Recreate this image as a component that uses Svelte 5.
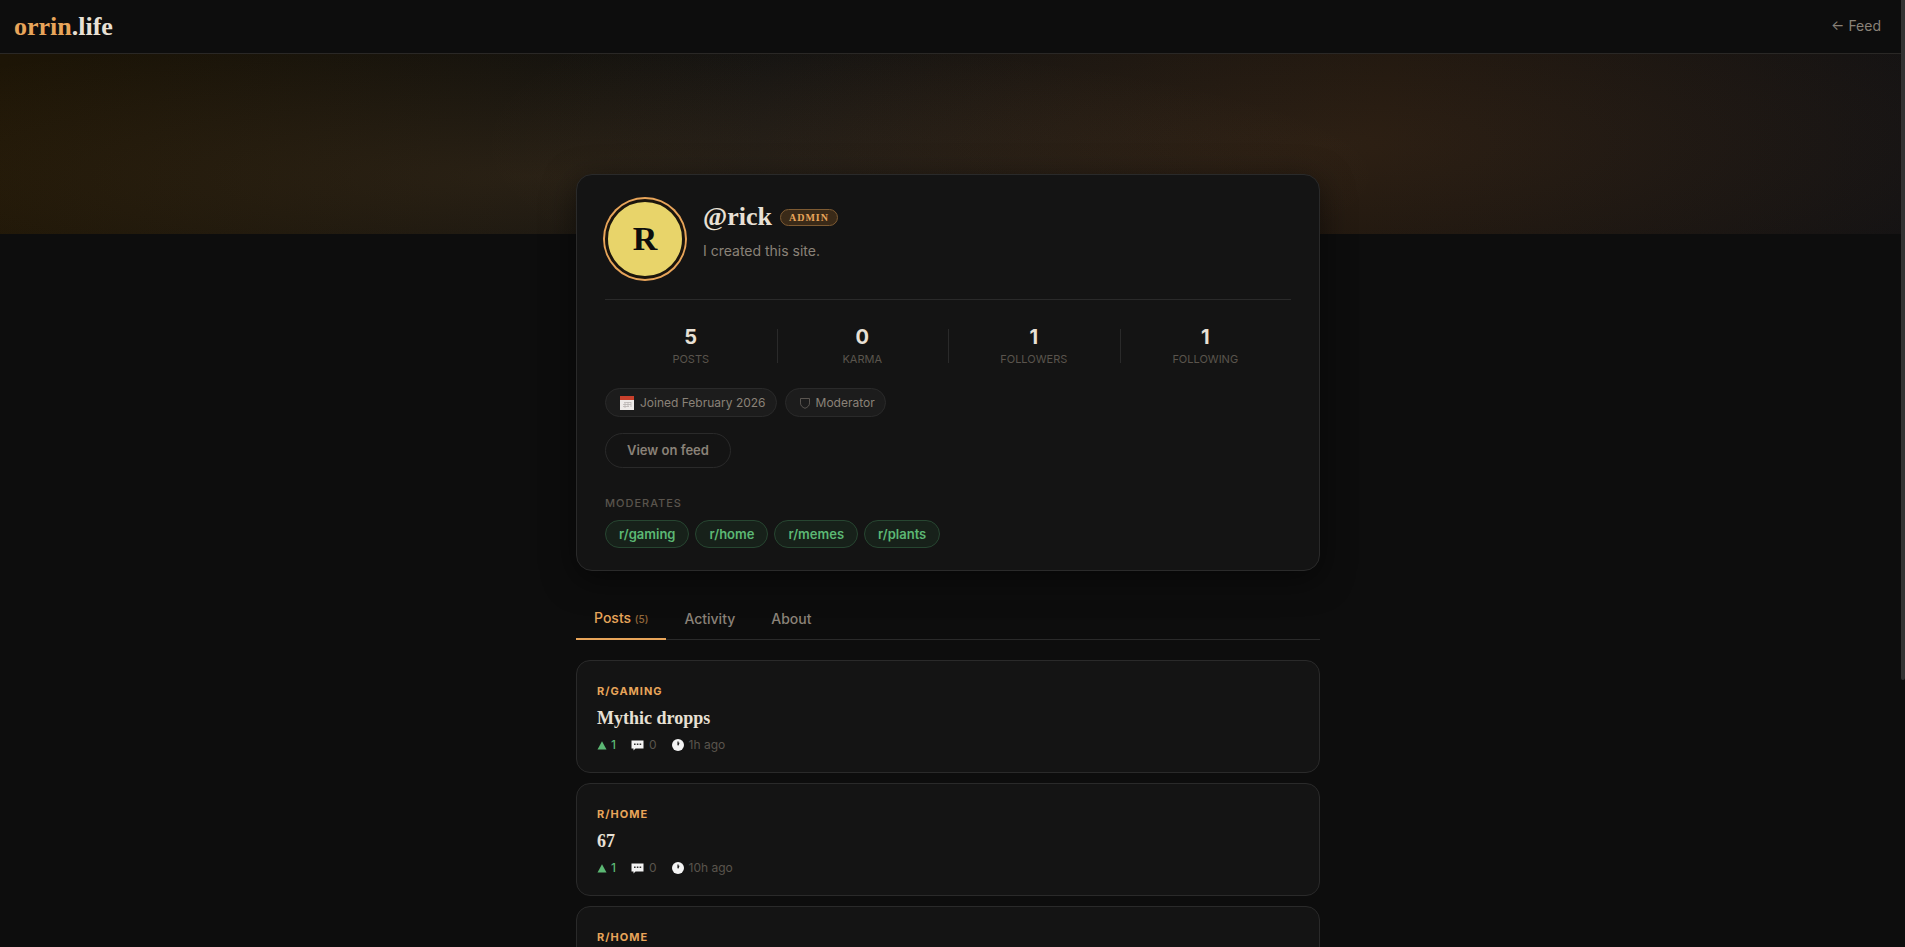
<script lang="ts">
	const stats = [
		{ value: 5, label: 'Posts' },
		{ value: 0, label: 'Karma' },
		{ value: 1, label: 'Followers' },
		{ value: 1, label: 'Following' }
	];

	const moderates = ['gaming', 'home', 'memes', 'plants'];

	const tabs = [
		{ id: 'posts', label: 'Posts', count: 5 },
		{ id: 'activity', label: 'Activity' },
		{ id: 'about', label: 'About' }
	];

	const posts = [
		{ id: 1, sub: 'gaming', title: 'Mythic dropps', votes: 1, comments: 0, age: '1h ago' },
		{ id: 2, sub: 'home', title: '67', votes: 1, comments: 0, age: '10h ago' },
		{ id: 3, sub: 'home' }
	];

	let activeTab = $state('posts');
</script>

<div class="page">
	<header class="topbar">
		<a class="logo" href="/"><span>orrin</span>.life</a>
		<a class="back" href="/feed">← Feed</a>
	</header>

	<div class="banner"></div>

	<main class="container">
		<section class="profile">
			<div class="identity">
				<div class="avatar">R</div>
				<div class="who">
					<div class="name-row">
						<h1>@rick</h1>
						<span class="badge">ADMIN</span>
					</div>
					<p class="bio">I created this site.</p>
				</div>
			</div>

			<div class="stats">
				{#each stats as stat (stat.label)}
					<div class="stat">
						<strong>{stat.value}</strong>
						<span>{stat.label}</span>
					</div>
				{/each}
			</div>

			<div class="pills">
				<span class="pill">
					<svg width="14" height="14" viewBox="0 0 14 14" aria-hidden="true">
						<rect width="14" height="14" fill="#eeeae8" />
						<rect width="14" height="4" fill="#c8402c" />
						<path
							d="M4 6.5h7M3 8.5h8M3 10.5h6M5 7v5M8 6v5M11 6v5"
							stroke="#b9b4b1"
							stroke-width="0.8"
						/>
					</svg>
					Joined February 2026
				</span>
				<span class="pill">
					<svg width="10" height="12" viewBox="0 0 10 12" aria-hidden="true">
						<path
							d="M0.5 1.5h9v4.4c0 2.8-1.8 4.4-4.5 5.4-2.7-1-4.5-2.6-4.5-5.4z"
							fill="none"
							stroke="#6b655e"
							stroke-width="0.8"
						/>
					</svg>
					Moderator
				</span>
			</div>

			<button class="view-btn">View on feed</button>

			<h2>Moderates</h2>
			<div class="chips">
				{#each moderates as sub (sub)}
					<a class="chip" href="/r/{sub}">r/{sub}</a>
				{/each}
			</div>
		</section>

		<div class="tabs" role="tablist">
			{#each tabs as tab (tab.id)}
				<button
					class="tab"
					class:active={activeTab === tab.id}
					role="tab"
					aria-selected={activeTab === tab.id}
					onclick={() => (activeTab = tab.id)}
				>
					{tab.label}
					{#if tab.count}<small>({tab.count})</small>{/if}
				</button>
			{/each}
		</div>

		<div class="posts">
			{#each posts as post (post.id)}
				<article class="post">
					<a class="sub" href="/r/{post.sub}">r/{post.sub}</a>
					{#if post.title}
						<h3>{post.title}</h3>
						<div class="meta">
							<span class="votes">
								<svg width="10" height="9" viewBox="0 0 10 9" aria-hidden="true">
									<path d="M5 0.2 9.5 8.5h-9z" fill="#5cb874" />
								</svg>
								{post.votes}
							</span>
							<span class="item">
								<svg width="13" height="12" viewBox="0 0 13 12" aria-hidden="true">
									<path d="M0.5 1.5h12v8h-8l-2 2v-2h-2z" fill="#f4f4f4" />
									<path d="M3 4.5h1.6v1.6H3zM5.8 4.5h1.6v1.6H5.8zM8.6 4.5h1.6v1.6H8.6z" fill="#333" />
								</svg>
								{post.comments}
							</span>
							<span class="item">
								<svg width="12" height="12" viewBox="0 0 12 12" aria-hidden="true">
									<circle cx="6" cy="6" r="6" fill="#f4f4f4" />
									<path d="M6 2.4v3.8l1-2.6" fill="none" stroke="#222" stroke-width="1.2" />
								</svg>
								{post.age}
							</span>
						</div>
					{/if}
				</article>
			{/each}
		</div>
	</main>

	<div class="scroll-thumb"></div>
</div>

<style>
	:global(body) {
		background: #0d0d0d;
		margin: 0;
	}

	.page {
		color: #e8e0d5;
		font-family: Inter, sans-serif;
		height: 100vh;
		overflow: hidden;
	}

	a {
		color: inherit;
		text-decoration: none;
	}

	h1,
	h2,
	h3,
	p {
		margin: 0;
	}

	button {
		cursor: pointer;
		font-family: inherit;
	}

	.topbar {
		align-items: center;
		border-bottom: 1px solid #2a2826;
		display: flex;
		height: 53px;
		justify-content: space-between;
		margin-right: 4px;
		padding: 0 20px 0 14px;
	}

	.logo {
		font-family: 'Liberation Serif', serif;
		font-size: 26px;
		font-weight: 700;
	}

	.logo span {
		color: #e8a55a;
	}

	.back {
		color: #8a8278;
		font-size: 14px;
		line-height: 20px;
		padding-bottom: 2px;
	}

	.banner {
		background:
			radial-gradient(ellipse 45% 80% at 28% 68%, rgba(232, 165, 90, 0.1), transparent),
			radial-gradient(ellipse 45% 120% at 70% 50%, rgba(232, 150, 80, 0.11), transparent),
			linear-gradient(100deg, #1d1506 0%, #0f1010 40%, #16110c 72%, #101012 100%);
		height: 180px;
		margin-right: 4px;
	}

	.container {
		margin: -60px auto 0;
		max-width: 744px;
		padding: 0 23px 0 14px;
	}

	.profile {
		background: #141414;
		border: 1px solid #2a2a2a;
		border-radius: 16px;
		box-shadow: 0 8px 32px rgba(0, 0, 0, 0.5);
		padding: 24px 28px 22px;
		position: relative;
	}

	.identity {
		border-bottom: 1px solid #2a2a2a;
		display: flex;
		gap: 18px;
		padding-bottom: 20px;
	}

	.avatar {
		align-items: center;
		background: #e8d46a;
		border: 3px solid #1b150c;
		border-radius: 50%;
		box-shadow: 0 0 0 2px #e8a55a;
		box-sizing: border-box;
		color: #0d0d0d;
		display: flex;
		flex-shrink: 0;
		font-family: 'Liberation Serif', serif;
		font-size: 34px;
		font-weight: 700;
		height: 80px;
		justify-content: center;
		width: 80px;
	}

	.name-row {
		align-items: center;
		display: flex;
		gap: 8px;
		height: 36px;
	}

	h1 {
		font-family: 'Liberation Serif', serif;
		font-size: 26px;
		font-weight: 700;
	}

	.badge {
		background: #3a2a18;
		border: 1px solid #7d5a32;
		border-radius: 20px;
		color: #e8a55a;
		font-family: 'Liberation Serif', serif;
		font-size: 10px;
		font-weight: 700;
		letter-spacing: 1px;
		line-height: 15px;
		padding: 0 8px;
	}

	.bio {
		color: #8a8278;
		font-size: 14px;
		line-height: 20px;
		margin-top: 6px;
	}

	.stats {
		display: grid;
		grid-template-columns: repeat(4, 1fr);
		padding: 24px 0 20px;
	}

	.stat {
		align-items: center;
		display: flex;
		flex-direction: column;
		position: relative;
	}

	.stat + .stat::before {
		background: #2a2a2a;
		bottom: 5px;
		content: '';
		left: 0;
		position: absolute;
		top: 5px;
		width: 1px;
	}

	.stat strong {
		font-size: 20px;
		font-weight: 700;
		line-height: 26px;
	}

	.stat span {
		color: #5a544d;
		font-size: 11px;
		line-height: 18px;
		text-transform: uppercase;
	}

	.pills {
		display: flex;
		gap: 8px;
	}

	.pill {
		align-items: center;
		background: #1c1c1c;
		border: 1px solid #2a2a2a;
		border-radius: 20px;
		color: #8a8278;
		display: flex;
		font-size: 12px;
		gap: 6px;
		line-height: 27px;
		padding: 0 10px 0 14px;
	}

	.view-btn {
		background: transparent;
		border: 1px solid #2a2a2a;
		border-radius: 20px;
		color: #8a8278;
		display: block;
		font-size: 13px;
		font-weight: 600;
		line-height: 33px;
		margin-top: 16px;
		padding: 0 21px;
	}

	h2 {
		color: #5a544d;
		font-size: 11px;
		font-weight: 500;
		letter-spacing: 1px;
		line-height: 18px;
		margin-top: 26px;
		text-transform: uppercase;
	}

	.chips {
		display: flex;
		gap: 6px;
		margin-top: 8px;
	}

	.chip {
		background: #17211a;
		border: 1px solid #274631;
		border-radius: 20px;
		color: #5cb874;
		font-size: 13px;
		font-weight: 600;
		line-height: 26px;
		padding: 0 13px;
	}

	.tabs {
		border-bottom: 1px solid #2a2a2a;
		display: flex;
		margin-top: 28px;
	}

	.tab {
		background: none;
		border: none;
		border-bottom: 2px solid transparent;
		color: #8a8278;
		font-size: 14px;
		font-weight: 500;
		line-height: 20px;
		margin-bottom: -1px;
		padding: 9px 18px;
	}

	.tab.active {
		border-bottom-color: #e8a55a;
		color: #e8a55a;
	}

	.tab small {
		font-size: 10px;
		opacity: 0.6;
	}

	.posts {
		display: flex;
		flex-direction: column;
		gap: 10px;
		margin-top: 20px;
	}

	.post {
		background: #141414;
		border: 1px solid #2a2a2a;
		border-radius: 14px;
		padding: 20px 20px 17px;
	}

	.sub {
		color: #e8a55a;
		display: block;
		font-size: 11px;
		font-weight: 700;
		letter-spacing: 1px;
		line-height: 20px;
		text-transform: uppercase;
	}

	h3 {
		font-family: 'Liberation Serif', serif;
		font-size: 18px;
		font-weight: 700;
		line-height: 24px;
		margin-top: 5px;
	}

	.meta {
		color: #5a544d;
		display: flex;
		font-size: 12px;
		gap: 15px;
		line-height: 20px;
		margin-top: 5px;
	}

	.votes,
	.item {
		align-items: center;
		display: flex;
		gap: 5px;
	}

	.votes {
		color: #5cb874;
		font-weight: 500;
		gap: 4px;
	}

	.scroll-thumb {
		background: #333;
		border-radius: 0 0 3px 3px;
		height: 680px;
		position: fixed;
		right: 0;
		top: 0;
		width: 4px;
	}
</style>
